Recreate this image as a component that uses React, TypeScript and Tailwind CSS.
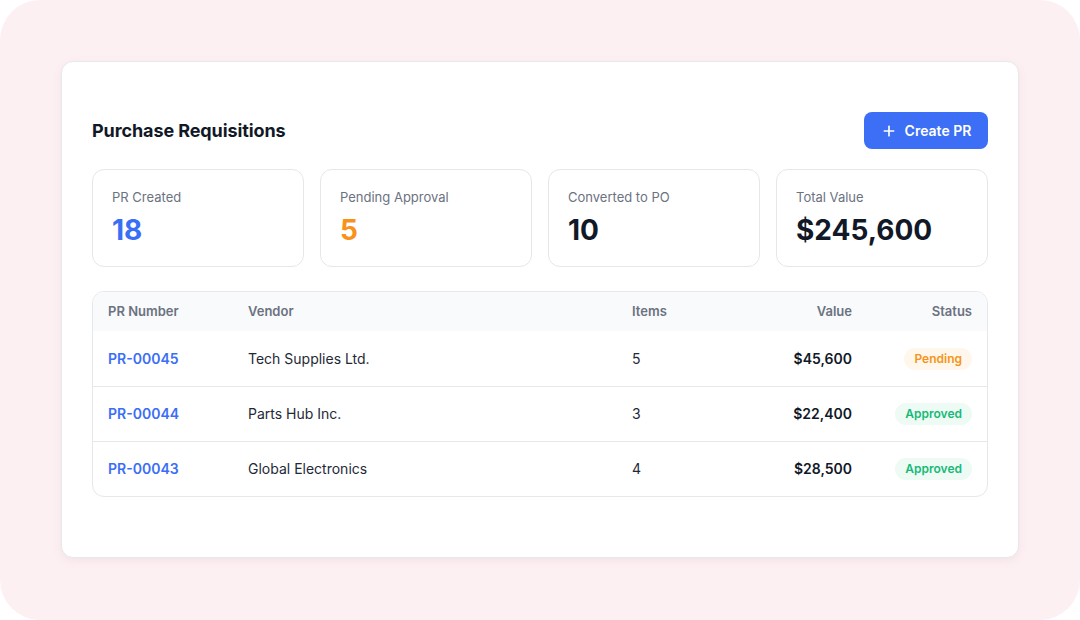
import { Plus } from "lucide-react";

type Row = {
  id: string;
  vendor: string;
  items: number;
  value: string;
  status: "Pending" | "Approved";
};

const stats = [
  { label: "PR Created", value: "18", color: "text-[#3b6ef6]" },
  { label: "Pending Approval", value: "5", color: "text-[#f7931a]" },
  { label: "Converted to PO", value: "10", color: "text-[#111827]" },
  { label: "Total Value", value: "$245,600", color: "text-[#111827]" },
];

const rows: Row[] = [
  { id: "PR-00045", vendor: "Tech Supplies Ltd.", items: 5, value: "$45,600", status: "Pending" },
  { id: "PR-00044", vendor: "Parts Hub Inc.", items: 3, value: "$22,400", status: "Approved" },
  { id: "PR-00043", vendor: "Global Electronics", items: 4, value: "$28,500", status: "Approved" },
];

const statusStyles: Record<Row["status"], string> = {
  Pending: "bg-[#fff7ec] text-[#f59418]",
  Approved: "bg-[#edfbf4] text-[#18b978]",
};

export default function App() {
  return (
    <div className="h-[620px] w-[1080px] bg-white font-['Inter',sans-serif]">
      <div className="flex h-full w-full items-start justify-center rounded-[40px] bg-[#fdf0f3] pt-[61px]">
        <div className="h-[497px] w-[958px] rounded-xl border border-[#e8e8ec] bg-white px-[30px] pt-[50px] shadow-[0_3px_10px_rgba(120,80,90,0.08)]">
          {/* ── Header ── */}
          <div className="flex h-[37px] items-center justify-between">
            <h1 className="text-[18px] font-bold tracking-[-0.1px] text-[#111827]">
              Purchase Requisitions
            </h1>
            <button className="flex h-[37px] w-[124px] items-center justify-center gap-2 rounded-lg bg-[#3d6ef6] text-sm font-semibold text-white">
              <Plus className="size-4" strokeWidth={2.5} />
              Create PR
            </button>
          </div>

          {/* ── Stats ── */}
          <div className="mt-5 grid grid-cols-4 gap-4">
            {stats.map((s) => (
              <div
                key={s.label}
                className="h-[98px] rounded-xl border border-[#e5e7eb] bg-white px-[19px] pt-[17px]"
              >
                <p className="text-[13px] leading-5 text-[#6b7280]">{s.label}</p>
                <p className={`mt-1.5 text-[28px] font-bold leading-[34px] ${s.color}`}>
                  {s.value}
                </p>
              </div>
            ))}
          </div>

          {/* ── Table ── */}
          <div className="mt-6 overflow-hidden rounded-xl border border-[#e5e7eb]">
            <div className="grid h-[39px] grid-cols-[140px_384px_120px_100px_120px] items-center bg-[#f8fafc] px-[15px] text-[13px] font-semibold text-[#6b7280]">
              <span>PR Number</span>
              <span>Vendor</span>
              <span>Items</span>
              <span className="text-right">Value</span>
              <span className="text-right">Status</span>
            </div>
            {rows.map((r, i) => (
              <div
                key={r.id}
                className={`grid h-[55px] grid-cols-[140px_384px_120px_100px_120px] items-center px-[15px] text-sm text-[#1f2937] ${
                  i > 0 ? "border-t border-[#e5e7eb]" : ""
                }`}
              >
                <span className="font-semibold text-[#3b6ef6]">{r.id}</span>
                <span>{r.vendor}</span>
                <span>{r.items}</span>
                <span className="text-right font-semibold text-[#111827]">{r.value}</span>
                <span className="flex justify-end">
                  <span
                    className={`rounded-full px-2.5 py-[3px] text-xs font-semibold ${statusStyles[r.status]}`}
                  >
                    {r.status}
                  </span>
                </span>
              </div>
            ))}
          </div>
        </div>
      </div>
    </div>
  );
}
